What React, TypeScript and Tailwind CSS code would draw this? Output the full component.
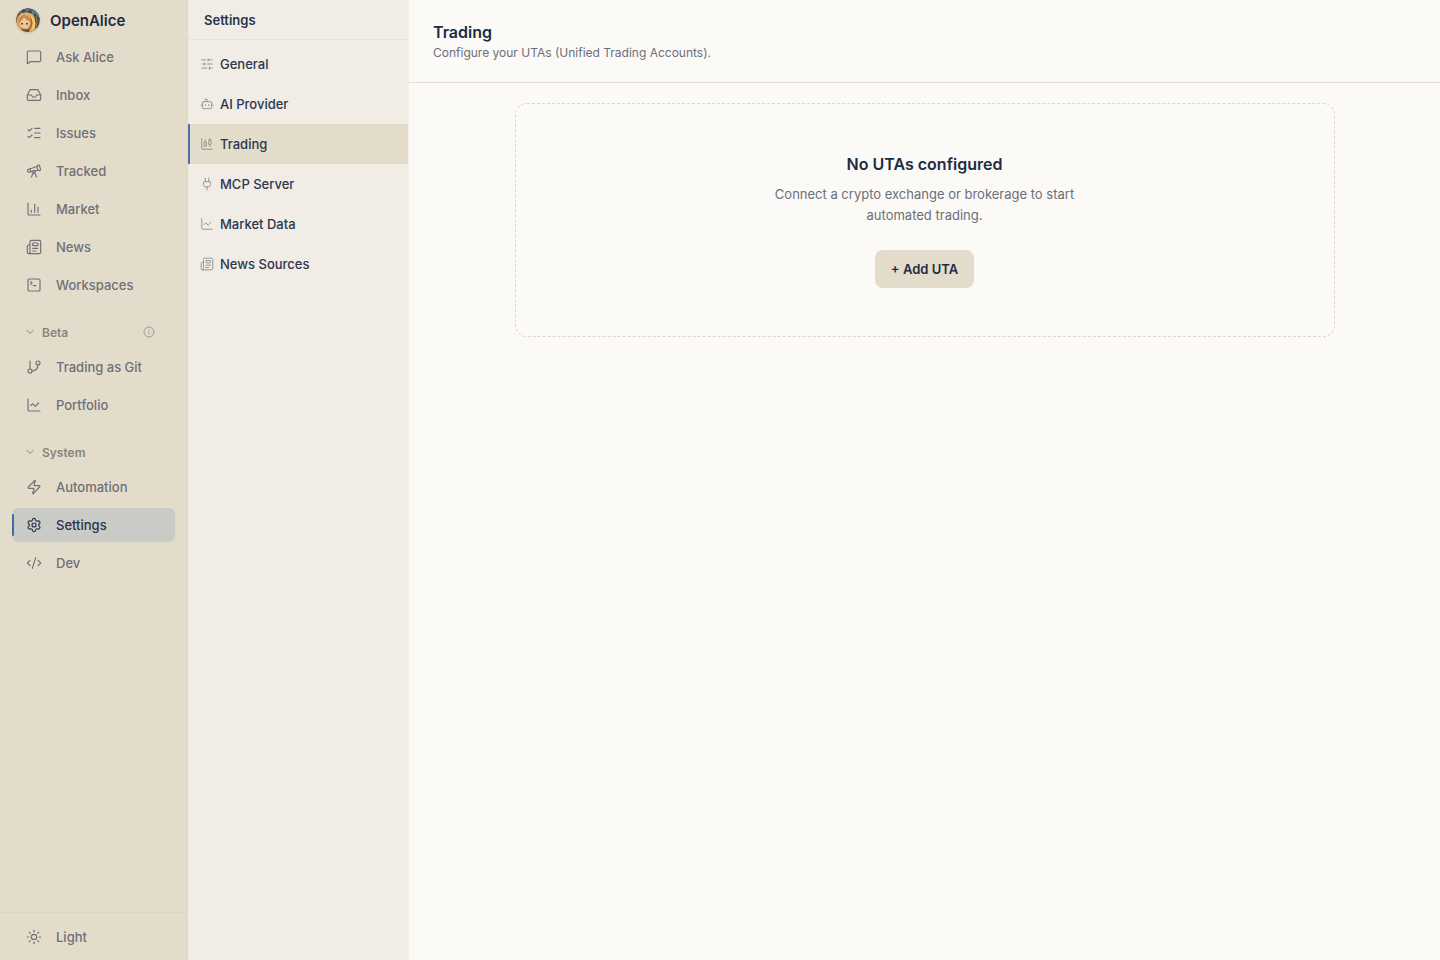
import { useState } from 'react';
import {
  Bot,
  ChartCandlestick,
  ChartColumn,
  ChartLine,
  ChevronDown,
  CodeXml,
  GitBranch,
  Inbox,
  Info,
  ListChecks,
  MessageSquare,
  Newspaper,
  Plug,
  Settings,
  SlidersHorizontal,
  SquareTerminal,
  Sun,
  Telescope,
  Zap,
  type LucideIcon,
} from 'lucide-react';
import clsx from 'clsx';

interface NavEntry {
  label: string;
  icon: LucideIcon;
}

interface NavGroup {
  title?: string;
  info?: boolean;
  items: NavEntry[];
}

const NAV: NavGroup[] = [
  {
    items: [
      { label: 'Ask Alice', icon: MessageSquare },
      { label: 'Inbox', icon: Inbox },
      { label: 'Issues', icon: ListChecks },
      { label: 'Tracked', icon: Telescope },
      { label: 'Market', icon: ChartColumn },
      { label: 'News', icon: Newspaper },
      { label: 'Workspaces', icon: SquareTerminal },
    ],
  },
  {
    title: 'Beta',
    info: true,
    items: [
      { label: 'Trading as Git', icon: GitBranch },
      { label: 'Portfolio', icon: ChartLine },
    ],
  },
  {
    title: 'System',
    items: [
      { label: 'Automation', icon: Zap },
      { label: 'Settings', icon: Settings },
      { label: 'Dev', icon: CodeXml },
    ],
  },
];

const SETTINGS: NavEntry[] = [
  { label: 'General', icon: SlidersHorizontal },
  { label: 'AI Provider', icon: Bot },
  { label: 'Trading', icon: ChartCandlestick },
  { label: 'MCP Server', icon: Plug },
  { label: 'Market Data', icon: ChartLine },
  { label: 'News Sources', icon: Newspaper },
];

function Avatar() {
  return (
    <svg viewBox="0 0 24 24" className="size-6 rounded-full shadow-sm" aria-hidden>
      <defs>
        <clipPath id="avatar-clip">
          <circle cx="12" cy="12" r="12" />
        </clipPath>
      </defs>
      <g clipPath="url(#avatar-clip)">
        <rect width="24" height="24" fill="#6b5a4c" />
        <path d="M3 7C6 0 17-1 22 6l2 7-4 3-4-9-9-1z" fill="#5c8099" />
        <path d="M7 1l4 3 4-3 1 4-5 2-5-2z" fill="#31485f" />
        <path d="M18 5l5 5-1 8-3 2z" fill="#3c3c42" />
        <path d="M1 11C3 5 9 3 14 5c5 2 6 7 5 17l-5 2-9-2c-4-3-5-7-4-11z" fill="#dba85c" />
        <path d="M3 10c2-4 6-5 10-3-4 0-7 2-8 6z" fill="#f3d58c" />
        <path d="M4 13l4-3 5 2 1 4-3 4H7l-3-3z" fill="#efc6a6" />
        <path d="M2 15c3-1 5-4 6-7 1 3 3 4 6 6l-1-5-5-3-5 4z" fill="#c98b42" />
        <path d="M5 15h2v1.5H5zM10 15h2v1.5h-2z" fill="#5b4539" />
        <path d="M13 6c4 3 4 9 1 16l4-1c3-5 1-11-3-14z" fill="#efc776" />
        <path d="M14 10c1 4 1 7-1 11h2c2-4 2-8 0-11z" fill="#a8672f" />
        <path d="M19 8c2 4 2 8 0 12l2-2c1-4 1-7-1-10z" fill="#c17b35" />
        <path d="M5 20c3 2 6 2 9 0l-1 4H7z" fill="#6b4b3a" />
      </g>
    </svg>
  );
}

function NavItem({ entry, active, onSelect }: { entry: NavEntry; active?: boolean; onSelect?: () => void }) {
  const Icon = entry.icon;
  return (
    <button
      type="button"
      onClick={onSelect}
      className={clsx(
        'relative flex h-[34px] w-full items-center gap-3.5 rounded-md px-3.5 text-left text-[13px] font-medium',
        active ? 'bg-[#cacbc6] text-[#27344d]' : 'text-[#6f7078]',
      )}
    >
      {active && <span className="absolute inset-y-1.5 left-0 w-0.5 rounded-full bg-[#3f6cab]" />}
      <Icon className="size-4 shrink-0" strokeWidth={1.75} />
      <span className="pt-0.5">{entry.label}</span>
    </button>
  );
}

function Sidebar() {
  const [active, setActive] = useState('Settings');
  const [closed, setClosed] = useState<string[]>([]);

  const toggle = (title: string) =>
    setClosed((prev) => (prev.includes(title) ? prev.filter((t) => t !== title) : [...prev, title]));

  return (
    <aside className="flex w-[188px] shrink-0 flex-col border-r border-[#e0d8c4] bg-[#e4dcca]">
      <div className="flex h-10 shrink-0 items-center gap-2.5 pl-4">
        <Avatar />
        <span className="pt-0.5 text-[15px] font-semibold text-[#202c44]">OpenAlice</span>
      </div>
      <nav className="flex-1 overflow-y-auto px-3">
        {NAV.map((group, i) => (
          <div key={group.title ?? i} className="flex flex-col gap-1">
            {group.title && (
              <button
                type="button"
                onClick={() => toggle(group.title!)}
                className="mt-4 flex h-7 items-center gap-1.5 pr-5 pl-3 text-xs font-semibold text-[#85847f]"
              >
                <ChevronDown
                  className={clsx('size-3', closed.includes(group.title) && '-rotate-90')}
                  strokeWidth={2}
                />
                <span className="pt-0.5">{group.title}</span>
                {group.info && <Info className="ml-auto size-3 text-[#96948f]" strokeWidth={1.75} />}
              </button>
            )}
            {!closed.includes(group.title ?? '') &&
              group.items.map((entry) => (
                <NavItem
                  key={entry.label}
                  entry={entry}
                  active={entry.label === active}
                  onSelect={() => setActive(entry.label)}
                />
              ))}
          </div>
        ))}
      </nav>
      <div className="flex h-12 shrink-0 items-center border-t border-[#dcd4c2] px-3">
        <NavItem entry={{ label: 'Light', icon: Sun }} />
      </div>
    </aside>
  );
}

function SettingsList({ section, onSelect }: { section: string; onSelect: (s: string) => void }) {
  return (
    <section className="flex w-[221px] shrink-0 flex-col border-r border-[#f3efe8] bg-[#f1ece5]">
      <h2 className="flex h-10 items-center border-b border-[#e9e3d9] px-4 text-[13px] font-semibold text-[#27344d]">
        <span className="pt-0.5">Settings</span>
      </h2>
      <ul className="py-1">
        {SETTINGS.map(({ label, icon: Icon }) => (
          <li key={label}>
            <button
              type="button"
              onClick={() => onSelect(label)}
              className={clsx(
                'flex h-10 w-full items-center gap-1.5 border-l-2 px-2.5 text-left text-[13px] font-medium text-[#2b374e]',
                label === section ? 'border-[#4a74ab] bg-[#e4dcca]' : 'border-transparent',
              )}
            >
              <Icon className="size-3.5 shrink-0 text-[#8c8b8d]" strokeWidth={1.5} />
              <span className="pt-0.5">{label}</span>
            </button>
          </li>
        ))}
      </ul>
    </section>
  );
}

export default function App() {
  const [section, setSection] = useState('Trading');

  return (
    <div className="flex h-screen bg-[#fcfaf6] font-['Inter',sans-serif] text-[#202c44]">
      <Sidebar />
      <SettingsList section={section} onSelect={setSection} />
      <main className="flex min-w-0 flex-1 flex-col">
        <header className="border-b border-[#e4dfd0] px-6 py-5">
          <h1 className="text-base font-semibold">Trading</h1>
          <p className="text-xs leading-[18px] text-[#6b6f7b]">
            Configure your UTAs (Unified Trading Accounts).
          </p>
        </header>
        <div className="flex-1 overflow-y-auto px-6 py-5">
          <div className="mx-auto flex max-w-[820px] flex-col items-center rounded-xl border border-dashed border-[#dcd7ca] px-6 py-12 text-center">
            <h3 className="text-base font-semibold">No UTAs configured</h3>
            <p className="mt-2 max-w-[320px] text-[13px] leading-[21px] text-[#6b6f7b]">
              Connect a crypto exchange or brokerage to start automated trading.
            </p>
            <button
              type="button"
              className="mt-6 flex h-[38px] items-center rounded-lg bg-[#e4dcca] px-4 text-[13px] font-semibold"
            >
              <span className="pt-0.5">+ Add UTA</span>
            </button>
          </div>
        </div>
      </main>
    </div>
  );
}
